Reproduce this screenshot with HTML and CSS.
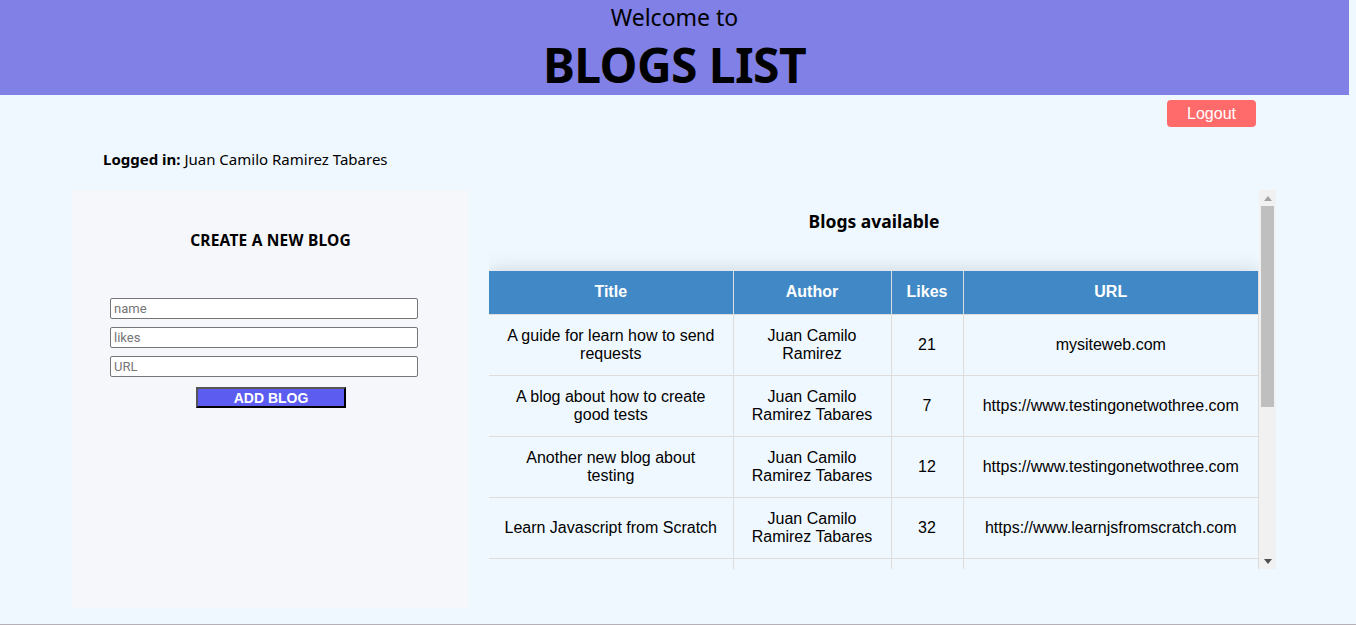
FILE: index.html
```html
<!DOCTYPE html>
<html>
<head>
<meta charset="utf-8">
<link rel="stylesheet" href="styles.css">
</head>
<body>
<div class="page">
  <header class="hero">
    <div class="welcome">Welcome to</div>
    <h1 class="title">BLOGS LIST</h1>
  </header>
  <div class="topbar">
    <button class="logout">Logout</button>
  </div>
  <div class="logged"><strong>Logged in:</strong> Juan Camilo Ramirez Tabares</div>
  <div class="content">
    <section class="create">
      <h2 class="create-title">CREATE A NEW BLOG</h2>
      <form class="form">
        <input class="field" placeholder="name">
        <input class="field" placeholder="likes">
        <input class="field" placeholder="URL">
        <button type="button" class="add">ADD BLOG</button>
      </form>
    </section>
    <section class="list-box">
      <div class="list">
        <h2 class="list-title">Blogs available</h2>
        <table class="blogs">
          <thead>
            <tr><th class="c1">Title</th><th class="c2">Author</th><th class="c3">Likes</th><th class="c4">URL</th></tr>
          </thead>
          <tbody>
            <tr><td>A guide for learn how to send requests</td><td>Juan Camilo Ramirez</td><td>21</td><td>mysiteweb.com</td></tr>
            <tr><td>A blog about how to create good tests</td><td>Juan Camilo Ramirez Tabares</td><td>7</td><td>https://www.testingonetwothree.com</td></tr>
            <tr><td>Another new blog about testing</td><td>Juan Camilo Ramirez Tabares</td><td>12</td><td>https://www.testingonetwothree.com</td></tr>
            <tr><td>Learn Javascript from Scratch</td><td>Juan Camilo Ramirez Tabares</td><td>32</td><td>https://www.learnjsfromscratch.com</td></tr>
            <tr class="clipped"><td></td><td></td><td></td><td></td></tr>
          </tbody>
        </table>
      </div>
      <div class="scrollbar">
        <div class="sb-btn">
          <svg width="8" height="5" viewBox="0 0 8 5"><path d="M0 5 L4 0 L8 5 Z" fill="#a3a3a3"/></svg>
        </div>
        <div class="sb-track">
          <div class="sb-thumb"></div>
        </div>
        <div class="sb-btn">
          <svg width="8" height="5" viewBox="0 0 8 5"><path d="M0 0 L8 0 L4 5 Z" fill="#505050"/></svg>
        </div>
      </div>
    </section>
  </div>
  <div class="footer-line"></div>
</div>
</body>
</html>
```

FILE: styles.css
```css
html, body {
  margin: 0;
  padding: 0;
  background: #f0f8ff;
  overflow: hidden;
}
.page {
  width: 1349px;
  font-family: "Noto Sans", "Open Sans", sans-serif;
  color: #000;
}
.hero {
  background: #8080e6;
  height: 95px;
  text-align: center;
  display: flex;
  flex-direction: column;
  align-items: center;
}
.welcome {
  font-size: 23px;
  line-height: 32px;
  padding-top: 1px;
}
.title {
  margin: 0;
  padding-top: 2px;
  font-size: 48px;
  line-height: 60px;
  font-weight: 700;
  letter-spacing: -0.6px;
}
.topbar {
  display: flex;
  justify-content: flex-end;
  padding: 5px 93px 0 0;
}
.logout {
  width: 89px;
  height: 27px;
  background: #ff6b6b;
  color: #fff;
  border: none;
  border-radius: 4px;
  font-family: "Liberation Sans", Arial, sans-serif;
  font-size: 16px;
  padding: 0;
}
.logged {
  padding: 22px 0 0 103px;
  font-size: 15px;
  line-height: 20px;
}
.content {
  display: flex;
  gap: 20px;
  align-items: flex-start;
  padding: 21px 0 0 72px;
}
.create {
  width: 397px;
  height: 418px;
  background: #f5f7fb;
}
.create-title {
  margin: 40px 0 0;
  font-size: 15.5px;
  line-height: 20px;
  font-weight: 700;
  letter-spacing: 0.2px;
  text-align: center;
}
.form {
  display: flex;
  flex-direction: column;
  padding: 48px 0 0 38px;
}
.field {
  box-sizing: border-box;
  width: 308px;
  height: 21px;
  margin: 0 0 8px;
  border: 1px solid #767676;
  border-radius: 2px;
  background: #fff;
  font-family: Roboto, "Liberation Sans", sans-serif;
  font-size: 13px;
  padding: 0 3px;
}
.field::placeholder {
  color: #757575;
}
.add {
  align-self: flex-start;
  margin: 2px 0 0 86px;
  box-sizing: border-box;
  width: 150px;
  height: 21px;
  background: #5c5cf0;
  color: #fff;
  border: 2px solid;
  border-color: #555 #000 #000 #555;
  font-family: "Liberation Sans", Arial, sans-serif;
  font-weight: 700;
  font-size: 14px;
  padding: 0;
  line-height: 16px;
}
.list-box {
  display: flex;
  height: 379px;
}
.list {
  width: 770px;
  height: 379px;
  overflow: hidden;
}
.list-title {
  margin: 0;
  padding: 19px 0 0;
  height: 81px;
  box-sizing: border-box;
  font-size: 17.5px;
  line-height: 24px;
  font-weight: 700;
  text-align: center;
}
.blogs {
  width: 770px;
  border-collapse: collapse;
  box-shadow: 0 0 20px rgba(0, 0, 0, 0.15);
  font-family: "Liberation Sans", Arial, sans-serif;
  font-size: 16px;
  line-height: 18px;
  table-layout: fixed;
}
.blogs th {
  background: #4189c6;
  color: #fff;
  font-weight: 700;
  height: 43px;
  box-sizing: border-box;
  padding: 0 12px;
  border: 1px solid #dddddd;
  border-top: none;
}
.blogs td {
  height: 61px;
  box-sizing: border-box;
  padding: 0 14px;
  text-align: center;
  border: 1px solid #dddddd;
}
.blogs tr > :first-child { border-left: none; }
.c1 { width: 244px; }
.c2 { width: 158px; }
.c3 { width: 72px; }
.c4 { width: auto; }
.scrollbar {
  width: 17px;
  height: 379px;
  background: #f1f1f1;
  display: flex;
  flex-direction: column;
}
.sb-btn {
  height: 16px;
  display: flex;
  align-items: center;
  justify-content: center;
}
.sb-track {
  flex: 1;
  padding: 0 2px;
}
.sb-thumb {
  height: 201px;
  background: #bfbfbf;
}
.footer-line {
  margin-top: 16px;
  height: 1px;
  width: 1356px;
  background: #b5b0b8;
}
```
